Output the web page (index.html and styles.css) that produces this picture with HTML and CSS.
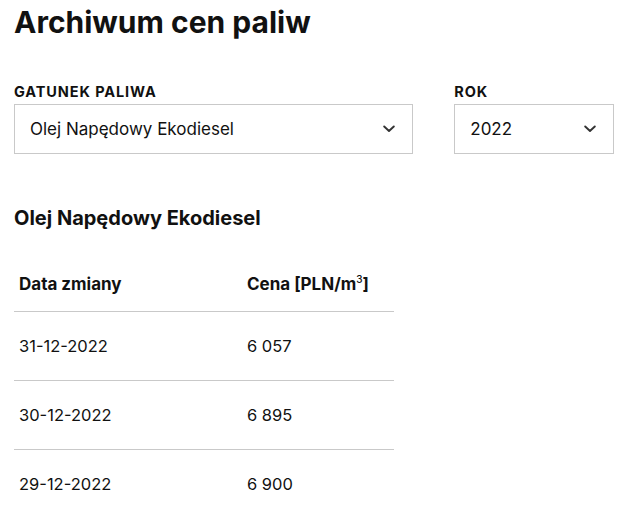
FILE: index.html
```html
<!DOCTYPE html>
<html lang="pl">
<head>
<meta charset="utf-8">
<title>Archiwum cen paliw</title>
<link rel="stylesheet" href="styles.css">
</head>
<body>
<main class="page">
  <h1 class="title">Archiwum cen paliw</h1>
  <div class="filters">
    <div class="field field-fuel">
      <label class="field-label">Gatunek paliwa</label>
      <div class="select">
        <span class="select-value">Olej Napędowy Ekodiesel</span>
        <svg class="chevron" width="12" height="8" viewBox="0 0 12 8"><path d="M1.2 1.5 L6 6 L10.8 1.5" fill="none" stroke="#333" stroke-width="1.9" stroke-linecap="round" stroke-linejoin="round"/></svg>
      </div>
    </div>
    <div class="field field-year">
      <label class="field-label">Rok</label>
      <div class="select">
        <span class="select-value">2022</span>
        <svg class="chevron" width="12" height="8" viewBox="0 0 12 8"><path d="M1.2 1.5 L6 6 L10.8 1.5" fill="none" stroke="#333" stroke-width="1.9" stroke-linecap="round" stroke-linejoin="round"/></svg>
      </div>
    </div>
  </div>
  <h2 class="subtitle">Olej Napędowy Ekodiesel</h2>
  <table class="prices">
    <thead>
      <tr><th class="col-date">Data zmiany</th><th>Cena [PLN/m<sup>3</sup>]</th></tr>
    </thead>
    <tbody>
      <tr><td class="col-date">31-12-2022</td><td>6 057</td></tr>
      <tr><td class="col-date">30-12-2022</td><td>6 895</td></tr>
      <tr><td class="col-date">29-12-2022</td><td>6 900</td></tr>
    </tbody>
  </table>
</main>
</body>
</html>
```

FILE: styles.css
```css
html, body {
  margin: 0;
  padding: 0;
  background: #fff;
}
body {
  font-family: "Inter", "Liberation Sans", sans-serif;
  color: #111;
}
.page {
  padding: 0 8px 0 14px;
}
.title {
  margin: 0;
  padding-top: 2px;
  font-size: 30px;
  line-height: 40px;
  font-weight: 700;
}
.filters {
  display: flex;
  gap: 41px;
  margin-top: 41px;
}
.field {
  display: flex;
  flex-direction: column;
}
.field-fuel { width: 400px; }
.field-year { width: 160px; }
.field-label {
  font-size: 14.5px;
  font-weight: 700;
  letter-spacing: 0.9px;
  text-transform: uppercase;
  line-height: 18px;
  margin-bottom: 3px;
}
.select {
  box-sizing: border-box;
  height: 50px;
  border: 1px solid #c9c9c9;
  display: flex;
  align-items: center;
  justify-content: space-between;
  padding: 0 17px 0 15px;
}
.select-value {
  font-size: 17px;
}
.chevron {
  display: block;
}
.subtitle {
  margin: 52px 0 0;
  font-size: 20px;
  line-height: 24px;
  font-weight: 700;
}
.prices {
  border-collapse: collapse;
  width: 380px;
  margin-top: 30px;
  font-size: 16.5px;
}
.prices th, .prices td {
  text-align: left;
  padding: 0 5px;
  line-height: 20px;
}
.prices th {
  font-size: 17px;
  font-weight: 700;
  padding-top: 14px;
  padding-bottom: 17px;
  border-bottom: 1px solid #c9c9c9;
}
.prices td {
  padding-top: 24px;
  padding-bottom: 24px;
  border-bottom: 1px solid #c9c9c9;
}
.col-date {
  width: 218px;
}
sup {
  font-size: 10px;
  font-weight: 500;
  line-height: 0;
  vertical-align: 7px;
}
```
